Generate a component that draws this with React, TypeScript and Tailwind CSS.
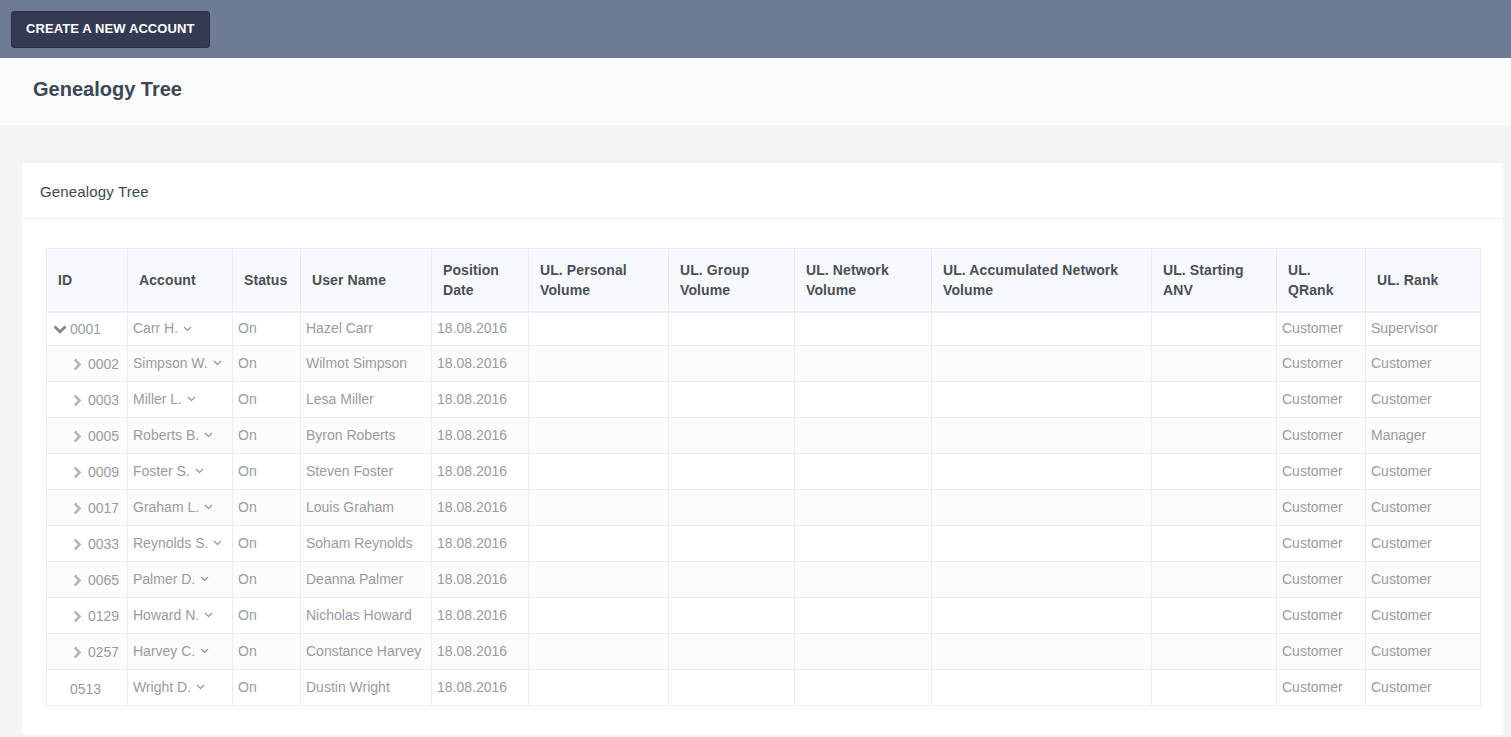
import React from "react";

const rows = [
  { id: "0001", acc: "Carr H.", name: "Hazel Carr", q: "Customer", r: "Supervisor", kind: "down" },
  { id: "0002", acc: "Simpson W.", name: "Wilmot Simpson", q: "Customer", r: "Customer", kind: "right" },
  { id: "0003", acc: "Miller L.", name: "Lesa Miller", q: "Customer", r: "Customer", kind: "right" },
  { id: "0005", acc: "Roberts B.", name: "Byron Roberts", q: "Customer", r: "Manager", kind: "right" },
  { id: "0009", acc: "Foster S.", name: "Steven Foster", q: "Customer", r: "Customer", kind: "right" },
  { id: "0017", acc: "Graham L.", name: "Louis Graham", q: "Customer", r: "Customer", kind: "right" },
  { id: "0033", acc: "Reynolds S.", name: "Soham Reynolds", q: "Customer", r: "Customer", kind: "right" },
  { id: "0065", acc: "Palmer D.", name: "Deanna Palmer", q: "Customer", r: "Customer", kind: "right" },
  { id: "0129", acc: "Howard N.", name: "Nicholas Howard", q: "Customer", r: "Customer", kind: "right" },
  { id: "0257", acc: "Harvey C.", name: "Constance Harvey", q: "Customer", r: "Customer", kind: "right" },
  { id: "0513", acc: "Wright D.", name: "Dustin Wright", q: "Customer", r: "Customer", kind: "none" },
];

const widths = [81, 105, 68, 131, 97, 140, 126, 137, 220, 125, 89, 115];

function ChevDown() {
  return (
    <svg width="14" height="9" viewBox="0 0 14 9" className="inline-block">
      <path d="M1.5 1.5 L7 6.8 L12.5 1.5" fill="none" stroke="#84878d" strokeWidth="2.8" />
    </svg>
  );
}
function ChevRight() {
  return (
    <svg width="9" height="13" viewBox="0 0 9 13" className="inline-block">
      <path d="M1.8 1.5 L6.5 6.5 L1.8 11.5" fill="none" stroke="#b5b7bb" strokeWidth="2.6" />
    </svg>
  );
}
function SmallDown() {
  return (
    <svg width="9" height="6" viewBox="0 0 9 6" className="inline-block ml-[5px] mb-[2px]">
      <path d="M1 1 L4.5 4.5 L8 1" fill="none" stroke="#8f939a" strokeWidth="1.1" />
    </svg>
  );
}

export default function App() {
  const headers = [
    "ID",
    "Account",
    "Status",
    "User Name",
    "Position Date",
    "UL. Personal Volume",
    "UL. Group Volume",
    "UL. Network Volume",
    "UL. Accumulated Network Volume",
    "UL. Starting ANV",
    "UL. QRank",
    "UL. Rank",
  ];
  return (
    <div className="min-h-[737px] bg-[#f3f4f6] font-['Liberation_Sans',Arial,sans-serif]">
      <div className="h-[58px] bg-[#6e7b94] flex items-center pl-[11px]">
        <button className="h-[37px] px-[14px] rounded-[3px] bg-[#343a52] text-white text-[13px] font-bold tracking-[0.1px] border border-[#2c3147]">
          CREATE A NEW ACCOUNT
        </button>
      </div>
      <div className="h-[67px] bg-[#fafafa] flex items-center pl-[33px] pb-[6px]">
        <h1 className="text-[20px] font-bold text-[#3e4756]">Genealogy Tree</h1>
      </div>
      <div className="pt-[38px] pl-[22px] pr-[8px] pb-[2px]">
        <div className="bg-white rounded-[4px]">
          <div className="h-[56px] flex items-center pl-[18px] pt-[4px] border-b border-[#f0f1f3] text-[15px] tracking-[0.15px] text-[#3e4756]">
            Genealogy Tree
          </div>
          <div className="pt-[29px] pl-[24px] pr-[23px] pb-[29px]">
            <table className="table-fixed border-collapse w-[1434px] text-[14px]">
              <colgroup>
                {widths.map((w, i) => (
                  <col key={i} style={{ width: w }} />
                ))}
              </colgroup>
              <thead>
                <tr className="h-[63px] bg-[#f8f9fc] border-b-[2px] border-[#eceef3]">
                  {headers.map((h, i) => (
                    <th
                      key={i}
                      className="border border-[#e9ebef] border-b-[2px] border-b-[#eceef3] text-left font-bold text-[#4a4f57] leading-[20px] px-[11px] align-middle tracking-[0.1px]"
                    >
                      {h}
                    </th>
                  ))}
                </tr>
              </thead>
              <tbody>
                {rows.map((r, i) => (
                  <tr key={r.id} className={`${i === 0 ? "h-[34px]" : "h-[36px]"} ${i % 2 === 1 ? "bg-[#fcfcfd]" : "bg-white"} text-[#989ba1]`}>
                    <td className={`border border-[#ebedf0] px-[6px] whitespace-nowrap ${i === 0 ? "pt-[2px]" : ""}`}>
                      {r.kind === "down" && (
                        <span className="inline-flex items-center">
                          <ChevDown />
                          <span className="ml-[3px]">{r.id}</span>
                        </span>
                      )}
                      {r.kind === "right" && (
                        <span className="inline-flex items-center pl-[20px] pt-[3px]">
                          <ChevRight />
                          <span className="ml-[6px]">{r.id}</span>
                        </span>
                      )}
                      {r.kind === "none" && <span className="pl-[17px] inline-block pt-[3px]">{r.id}</span>}
                    </td>
                    <td className="border border-[#ebedf0] px-[5px] whitespace-nowrap">
                      {r.acc}
                      <SmallDown />
                    </td>
                    <td className="border border-[#ebedf0] px-[5px]">On</td>
                    <td className="border border-[#ebedf0] px-[5px] whitespace-nowrap">{r.name}</td>
                    <td className="border border-[#ebedf0] px-[5px] whitespace-nowrap">18.08.2016</td>
                    <td className="border border-[#ebedf0]"></td>
                    <td className="border border-[#ebedf0]"></td>
                    <td className="border border-[#ebedf0]"></td>
                    <td className="border border-[#ebedf0]"></td>
                    <td className="border border-[#ebedf0]"></td>
                    <td className="border border-[#ebedf0] px-[5px]">{r.q}</td>
                    <td className="border border-[#ebedf0] px-[5px]">{r.r}</td>
                  </tr>
                ))}
              </tbody>
            </table>
          </div>
        </div>
      </div>
    </div>
  );
}
